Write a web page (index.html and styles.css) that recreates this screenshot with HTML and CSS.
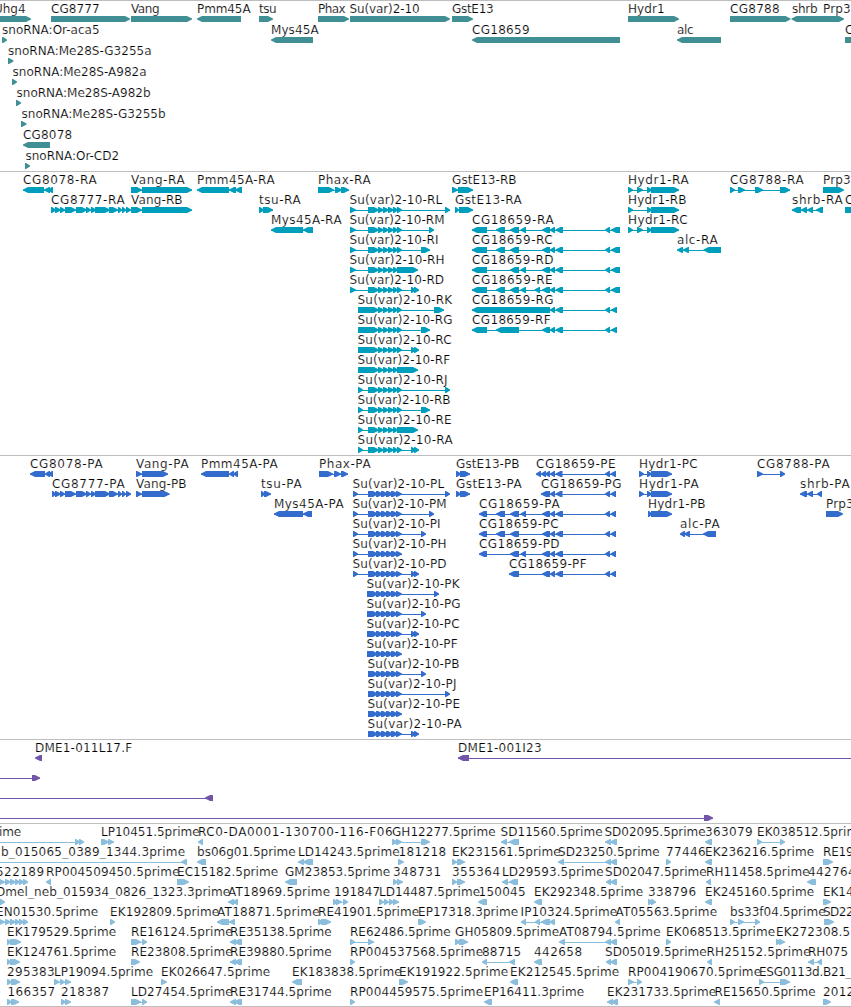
FILE: index.html
```
<!DOCTYPE html>
<html lang="en">
<head>
<meta charset="utf-8">
<title>Genome browser tracks</title>
<link rel="stylesheet" href="styles.css">
</head>
<body>
<main class="browser">
  <section class="track track-gene" data-track="gene"></section>
  <section class="track track-mrna" data-track="mrna"></section>
  <section class="track track-cds" data-track="cds"></section>
  <section class="track track-bac" data-track="bac"></section>
  <section class="track track-est" data-track="est"></section>
</main>
<script src="tracks.js"></script>
</body>
</html>
```
FILE: styles.css
```
body {
  margin: 0;
  background: #fff;
}

.browser {
  display: flex;
  flex-direction: column;
  width: 851px;
  height: 1006px;
  border-bottom: 1px solid #bebebe;
  overflow: hidden;
}

.track {
  box-sizing: border-box;
  border-top: 1px solid #bebebe;
  flex: none;
}

.track-gene { height: 171px; color: #408f94; }
.track-mrna { height: 284px; color: #009ebd; }
.track-cds { height: 284px; color: #336ccc; }
.track-bac { height: 84px; color: #7254a8; }
.track-est { height: 183px; color: #8bbedd; }

.canvas {
  display: block;
  width: 100%;
  height: 100%;
  overflow: hidden;
}

.label {
  font-family: "DejaVu Sans", sans-serif;
  font-size: 12px;
  fill: #000;
  stroke: #fff;
  stroke-width: 0.18px;
  white-space: pre;
}

.exon,
.intron {
  fill: currentColor;
}
```
FILE: tracks.js
```
// Each line is a row; features are separated by ";".
// Feature: label | label start | label end | strand | exon ranges
const SU = '368:379 378:384 383:389 388:394 393:398 397:402';
const SUB = '358:379 378:384 383:389 388:394 393:398 397:402';
const SP = '368:378 376:383 381:388 386:393 391:398 396:402';
const SPB = '367:378 376:383 381:388 386:393 391:398 396:402';
const CE = '542:550 550:555 555.5:563 605:610';

const tracks = {
  gene: { pitch: 21, rows: [
    `Uhg4|-6|25|+|-10:31;CG8777|51|99|+|51:130;Vang|131|159|+|131:192;Pmm45A|197|250|-|197:241;tsu|259|276|+|259:273;Phax|318|345|+|318:349;Su(var)2-10|349.5|419|+|350:450;GstE13|452|493|+|452:473;Hydr1|628|664|+|628:679;CG8788|730|779|+|730:790.5;shrb|792|817|-|791.5:824;Prp3|823|850|+|822:844`,
    `snoRNA:Or-aca5|2|99|+|2:7;Mys45A|271|318|-|271:313;CG18659|472|529|-|472:620;alc|677|693|-|677:721;C|845|853|+|845:870`,
    `snoRNA:Me28S-G3255a|8|151|+|8:13.5`,
    `snoRNA:Me28S-A982a|12.5|146|+|12:17`,
    `snoRNA:Me28S-A982b|16.5|150|+|16:21`,
    `snoRNA:Me28S-G3255b|21.5|165|+|21:26.5`,
    `CG8078|23|71.5|-|23:50`,
    `snoRNA:Or-CD2|25.5|118.5|+|25:30`
  ] },
  mrna: { pitch: 20, rows: [
    `CG8078-RA|23|96|-|23:44 44:50 48:53;Vang-RA|131|184|+|131:142 142:192;Pmm45A-RA|197|274|-|197:229 229:236 235:242;Phax-RA|318|370|+|318:334 335:342 341:349;GstE13-RB|452|516|+|452:458 458:473;Hydr1-RA|628|688|+|628:633 637:643 647:652 651:679;CG8788-RA|730|803|+|730:735 738:745 755:763 780:790;Prp3|823|850|+|823:844`,
    `CG8777-RA|51|124|+|51:56 55:61 60:65 65:76 76:87 86:91 91:96 95:110 109:118 118:122 122:126 126:131;Vang-RB|131|182|+|131:142 142:192;tsu-RA|259|300|+|259:264 263:273;Su(var)2-10-RL|349.5|441.5|+|350:356 ${SU} 445:450;GstE13-RA|455|521|+|455:459 459:473;Hydr1-RB|628|686|+|628:633 647:652 651:679;shrb-RA|792|842|-|792:801 801:807 807:813 816:823;C|845|853|+|845:870`,
    `Mys45A-RA|271|341|-|271:303 303:313;Su(var)2-10-RM|349.5|444|+|350:356 ${SU} 429:434;CG18659-RA|472|553|-|472:487 496:505 510:519 520.5:526 ${CE} 611:620;Hydr1-RC|628|687|+|628:633 637:643 647:652 651:679`,
    `Su(var)2-10-RI|349.5|438|+|350:356 ${SU} 421:430;CG18659-RC|472|552|-|472:487 496:505 510:519 ${CE} 611:620;alc-RA|677|717|-|677:683 683:689 703.5:721`,
    `Su(var)2-10-RH|349.5|444|+|350:356 ${SU} 397:418;CG18659-RD|472|553|-|472:487 510:519 520.5:526 ${CE} 611:620`,
    `Su(var)2-10-RD|349.5|443.5|+|350:356 ${SU} 411:416 414:419;CG18659-RE|472|552|-|472:487 496:505 510:519 520.5:526 534.5:540 ${CE} 611:620`,
    `Su(var)2-10-RK|357.5|451.5|+|${SUB} 434:444;CG18659-RG|472|553|-|472:550 550:555 555.5:563 605:610 611:617`,
    `Su(var)2-10-RG|357.5|452|+|${SUB} 421:430;CG18659-RF|472|550|-|472:487 496:519 ${CE} 611:617`,
    `Su(var)2-10-RC|357.5|451|+|${SUB} 411:416 414:419`,
    `Su(var)2-10-RF|357.5|449.5|+|${SUB} 397:418`,
    `Su(var)2-10-RJ|357.5|447|+|358:363 ${SU} 445:450`,
    `Su(var)2-10-RB|357.5|450|+|358:363 ${SU} 421:430`,
    `Su(var)2-10-RE|357.5|451|+|358:363 ${SU} 397:418`,
    `Su(var)2-10-RA|357.5|452|+|358:363 ${SU} 411:416 414:419`
  ] },
  cds: { pitch: 20, rows: [
    `CG8078-PA|30|102|-|30:45 45:50 48:53;Vang-PA|136|188|+|136:142 142:168;Pmm45A-PA|201|277|-|201:229 229:234 233:238;Phax-PA|319|370|+|319:333 334:341 341:348;GstE13-PB|456|519|+|456:461 460:470;CG18659-PE|536|615|-|536:541 541:546 545:550 550:555 555.5:562.5 605:610 610.5:616;Hydr1-PC|639|697|+|639:644 647:652 651:672;CG8788-PA|757|829|+|757:763 780:785`,
    `CG8777-PA|52|124|+|52:56 55:61 60:65 65:76 76:87 86:91 91:96 95:110 109:118 118:122 122:126 126:131;Vang-PB|136|186|+|136:142 142:169.5;tsu-PA|261|301|+|261:265 264:271;Su(var)2-10-PL|352.5|443.5|+|353:358 ${SP} 445:450;GstE13-PA|456|521|+|456:461 460:470;CG18659-PG|541|621|-|541:550 550:555 555.5:562.5 605:610 610.5:616;Hydr1-PA|639|698|+|639:644 647:652 651:672;shrb-PA|800|849|-|800:807 807:813 817:822`,
    `Mys45A-PA|274|343|-|274:303 303:312;Su(var)2-10-PM|352.5|446|+|353:358 ${SP} 429:434;CG18659-PA|479|559|-|479:487 496:505 510:519 520.5:526 ${CE} 610.5:616;Hydr1-PB|648|705|+|648:652 651:672;Prp3|826|853|+|826:843`,
    `Su(var)2-10-PI|352.5|440|+|353:358 ${SP} 421:426;CG18659-PC|479|558|-|479:487 496:505 510:519 ${CE} 610.5:616;alc-PA|680|719|-|680:685 684:690 703:716`,
    `Su(var)2-10-PH|352.5|446|+|353:358 ${SP};CG18659-PD|479|559|-|479:487 510:519 520.5:526 ${CE} 610.5:616`,
    `Su(var)2-10-PD|352.5|446|+|353:358 ${SP} 411:416 414:419;CG18659-PF|509|586|-|509:519 ${CE} 610.5:616`,
    `Su(var)2-10-PK|366.5|459|+|${SPB} 434:439`,
    `Su(var)2-10-PG|366.5|460|+|${SPB} 421:426`,
    `Su(var)2-10-PC|366.5|459|+|${SPB} 411:416 414:419`,
    `Su(var)2-10-PF|366.5|457|+|${SPB}`,
    `Su(var)2-10-PB|367.5|459|+|${SP} 421:426`,
    `Su(var)2-10-PJ|367.5|456|+|${SP} 445:450`,
    `Su(var)2-10-PE|367.5|459.5|+|${SP}`,
    `Su(var)2-10-PA|367.5|461|+|${SP} 411:416 414:419`
  ] },
  bac: { pitch: 20, rows: [
    `DME1-011L17.F|35|131.5|-|35:42;DME1-001I23|458|541|-|458:469 870:880`,
    `|0|0|+|-20:-10 32:40`,
    `|0|0|-|-20:-10 205:213`,
    `|0|0|+|-20:-10 704:713`
  ] },
  est: { pitch: 20, rows: [
    `ime|-1|20.5|+|-20:-10 75:80 79:84;LP10451.5prime|101|199|+|101:109 108:114;RC0-DA0001-130700-116-F06|198|392|-|198:203;GH12277.5prime|392|495|+|392:398 396:402 421:430;SD11560.5prime|500.5|602|-|501:507 509:519;SD02095.5prime|604.5|705|-|605:611 610:617;363079|705|752|-|705:712;EK038512.5prime|757|865|+|757:762 780:785`,
    `b_015065_0389_1344.3prime|1|184.5|-|-20:-10 181:187;bs06g01.5prime|197|295|-|197:206;LD14243.5prime|298|399|-|298:304 303:313;181218|398.5|445.5|+|398:404;EK231561.5prime|452|560|+|452:457 457:465;SD23250.5prime|558|659|-|558:564 605:611 610:617;77446|666|705|+|666:671;EK236216.5prime|705|813.5|-|705:712;RE19|823|853|+|823:833`,
    `522189|-4|43.5|+|-3:5 5:11 10:16 15:20 19:24 23:28;RP004509450.5prime|46|179|-|46:51;EC15182.5prime|177|277.5|+|177:189;GM23853.5prime|285|389.5|-|285:297;348731|393|440.5|+|393:398 397:403;355364|452|499.5|+|452:457 457:465;LD29593.5prime|502|603|-|502:508 509:518;SD02047.5prime|605|706|-|606:611 610:617;RH11458.5prime|706|809|-|706:711;442764|808|855|-|807:816`,
    `Dmel_neb_015934_0826_1323.3prime|-4|229.5|+|0:5;AT18969.5prime|228|329.5|-|228:234 232:238;191847|334|379.5|+|333:338 336:342 343:348;LD14487.5prime|379|479.5|+|379:384 384:389 389:394 393:399;150045|478.5|525|-|478:487;EK292348.5prime|534|642.5|-|534:542;338796|648|695.5|+|648:653 651:656;EK245160.5prime|705|813.5|-|705:712;EK14|823|853|+|823:831`,
    `EN01530.5prime|-4|97.5|+|-3:5 5:11 10:16 15:20 19:24 23:28;EK192809.5prime|110|218.5|+|110:115;AT18871.5prime|217|319|-|217:229 229:235;RE41901.5prime|318|418.5|+|318:323 321:331;EP17318.3prime|418|517.5|+|418:426;IP10324.5prime|520.5|616.5|-|521:526 535:540 541:550 549:555;AT05563.5prime|615.5|716.5|-|615:620;bs33f04.5prime|730|825|+|730:735 738:744 755:760;SD22|823|853|+|824:834`,
    `EK179529.5prime|7|115.5|+|7:11 10:21;RE16124.5prime|131|232|+|131:141 142:147;RE35138.5prime|230|331|-|230:236 234:242;RE62486.5prime|350|450|+|350:355 368:374;GH05809.5prime|455|558.5|+|455:461 459:468;AT08794.5prime|559|660|-|559:565 605:611 610:617;EK068513.5prime|666|774.5|+|666:671;EK272308.5|776|849.5|+|776:781 779:785`,
    `EK124761.5prime|7|115.5|+|7:11 10:20;RE23808.5prime|131|232|+|131:140;RE39880.5prime|230|331|-|230:236 234:242;RP004537568.5prime|350|482.5|+|350:355;88715|482|520.5|-|482:487 509:515;442658|534|581.5|-|534:542;SD05019.5prime|605|706|-|606:611 610:617;RH25152.5prime|706.5|810|-|707:712;RH075|808|847.5|-|808:814 817:822`,
    `295383|7|54|+|7:12 11:20;LP19094.5prime|54|152.5|+|54:60 60:65 65:71;EK026647.5prime|161|269.5|+|161:167;EK183838.5prime|292|401|-|292:302;EK191922.5prime|399|507.5|+|399:408;EK212545.5prime|510|618.5|-|510:518;RP004190670.5prime|628|760.5|+|628:634 637:642;ESG0113d.B21_|759|851|+|759:764 780:790`,
    `166357|7.5|54.5|+|7:12 11:19;218387|61|108.5|+|61:66 65:71;LD27454.5prime|131|232|+|131:141 142:147;RE31744.5prime|230|331|-|230:236 234:242;RP004459575.5prime|350|482.5|+|350:355;EP16411.3prime|484|583.5|-|484:492;EK231733.5prime|607|715.5|-|607:613 611:618;RE15650.5prime|714.5|815|-|714:720;2012|823|853.5|+|823:831`
  ] }
};

const NS = 'http://www.w3.org/2000/svg';
const BAR = 6;
const HEAD = 5;

function add(parent, name, attrs) {
  const node = document.createElementNS(NS, name);
  for (const key in attrs) node.setAttribute(key, attrs[key]);
  parent.appendChild(node);
  return node;
}

function drawExon(svg, a, b, y, strand) {
  const mid = y + BAR / 2;
  const bottom = y + BAR;
  const points = strand === '+'
    ? [[a, y], [Math.max(a + 1, b - HEAD), y], [b, mid - 0.5], [b, mid + 0.5], [Math.max(a + 1, b - HEAD), bottom], [a, bottom]]
    : [[b, y], [Math.min(b - 1, a + HEAD), y], [a, mid - 0.5], [a, mid + 0.5], [Math.min(b - 1, a + HEAD), bottom], [b, bottom]];
  add(svg, 'polygon', { class: 'exon', points: points.map(p => p.join(',')).join(' ') });
}

document.querySelectorAll('.track').forEach(section => {
  const { pitch, rows } = tracks[section.dataset.track];
  const svg = add(section, 'svg', { class: 'canvas' });
  rows.forEach((row, i) => {
    const top = i * pitch;
    row.split(';').forEach(item => {
      const [label, start, end, strand, ranges] = item.split('|');
      const exons = ranges.split(' ').map(r => r.split(':').map(Number));
      const y = top + 15;
      const from = exons[0][0];
      const to = exons[exons.length - 1][1];
      if (exons.length > 1) {
        add(svg, 'rect', { class: 'intron', x: from, y: y + 3, width: to - from, height: 1 });
      }
      exons.forEach(([a, b]) => drawExon(svg, a, b, y, strand));
      if (label) {
        const text = add(svg, 'text', {
          class: 'label', x: start, y: top + 12, textLength: end - start + 0.6
        });
        text.textContent = label;
      }
    });
  });
});
```
